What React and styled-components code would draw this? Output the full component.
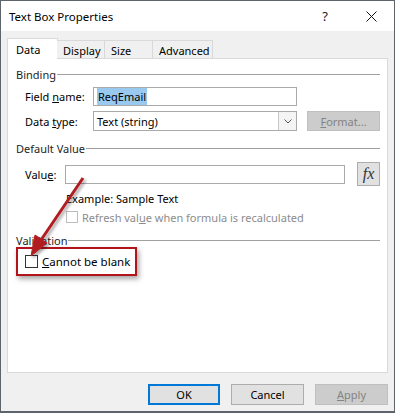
import React from "react";
import styled, { createGlobalStyle } from "styled-components";

const GlobalStyle = createGlobalStyle`
  body {
    margin: 0;
    background: #ffffff;
    font-family: "Noto Sans", "Open Sans", sans-serif;
    font-size: 11px;
    color: #000;
  }
`;

const Window = styled.div`
  position: relative;
  width: 395px;
  height: 413px;
  box-sizing: border-box;
  border: 1px solid #5e646b;
  border-bottom-width: 2px;
  background: #f0f0f0;
  display: flex;
  flex-direction: column;
`;

const TitleBar = styled.div`
  height: 30px;
  background: #fff;
  display: flex;
  align-items: center;
  padding-left: 8px;
`;

const Title = styled.div`
  flex: 1;
  font-size: 11.5px;
`;

const TitleButton = styled.div`
  width: 46px;
  height: 30px;
  display: flex;
  align-items: center;
  justify-content: center;
  font-size: 13px;
  color: #222;
`;

const Body = styled.div`
  flex: 1;
  display: flex;
  flex-direction: column;
  padding: 7px 6px 0 6px;
`;

const TabRow = styled.div`
  display: flex;
  align-items: flex-end;
  height: 21px;
  position: relative;
  z-index: 1;
  margin-bottom: -1px;
`;

const Tab = styled.div`
  width: ${p => p.w}px;
  height: ${p => (p.active ? 21 : 19)}px;
  box-sizing: border-box;
  border: 1px solid #d9d9d9;
  border-left-width: ${p => (p.first || p.active ? 1 : 0)}px;
  border-bottom: ${p => (p.active ? "none" : "1px solid #d9d9d9")};
  background: ${p => (p.active ? "#fff" : "#f0f0f0")};
  padding: ${p => (p.active ? "3px 0 0 8px" : "2px 0 0 6px")};
  ${p => p.active && "margin-right: -1px;"}
`;

const Panel = styled.div`
  height: 315px;
  box-sizing: border-box;
  background: #fff;
  border: 1px solid #d9d9d9;
  padding: 0 7px 0 8px;
  display: flex;
  flex-direction: column;
`;

const Section = styled.div`
  display: flex;
  align-items: center;
  height: 16px;
  margin-top: ${p => p.mt}px;
  color: #1e1e1e;
  &::after {
    content: "";
    flex: 1;
    height: 1px;
    background: #a0a0a0;
    margin-left: 1px;
  }
`;

const Row = styled.div`
  display: flex;
  align-items: center;
  height: ${p => p.h || 20}px;
  margin-top: ${p => p.mt}px;
  padding-left: ${p => p.indent || 9}px;
`;

const Label = styled.div`
  width: ${p => p.w}px;
  flex: none;
`;

const Input = styled.div`
  width: ${p => p.w}px;
  height: ${p => p.h || 19}px;
  box-sizing: border-box;
  border: 1px solid #a9a9a9;
  background: #fff;
  display: flex;
  align-items: center;
  padding-left: 3px;
`;

const Selected = styled.span`
  background: #99c9ef;
  padding: 1px 1px;
`;

const DropButton = styled.div`
  margin-left: auto;
  width: 18px;
  height: 18px;
  box-sizing: border-box;
  border-left: 1px solid #c8c8c8;
  background: #f4f4f4;
  display: flex;
  align-items: center;
  justify-content: center;
`;

const GrayButton = styled.div`
  width: ${p => p.w}px;
  height: ${p => p.h}px;
  margin-left: ${p => p.ml || 0}px;
  box-sizing: border-box;
  border: 1px solid #bfbfbf;
  background: #cccccc;
  color: #838383;
  display: flex;
  align-items: center;
  justify-content: center;
`;

const FxButton = styled.div`
  width: 23px;
  height: 24px;
  margin-left: 12px;
  box-sizing: border-box;
  border: 1px solid #adadad;
  background: #e1e1e1;
  display: flex;
  align-items: center;
  justify-content: center;
  font-family: "Liberation Serif", "DejaVu Serif", serif;
  font-style: italic;
  font-size: 16px;
  color: #333;
`;

const Hint = styled.div`
  height: 16px;
  margin-top: ${p => p.mt}px;
  padding-left: 50px;
  display: flex;
  align-items: center;
  color: ${p => (p.disabled ? "#8c8c8c" : "#000")};
  gap: 4px;
`;

const Check = styled.div`
  width: ${p => p.size || 13}px;
  height: ${p => p.size || 13}px;
  box-sizing: border-box;
  border: 1px solid ${p => (p.disabled ? "#bcbcbc" : "#333")};
  background: #fff;
  flex: none;
`;

const Highlight = styled.div`
  width: 121px;
  height: 29px;
  box-sizing: border-box;
  margin-top: -1px;
  border: 2px solid #b3141c;
  box-shadow: 2px 3px 5px rgba(0, 0, 0, 0.35);
  display: flex;
  align-items: center;
  padding-left: 7px;
  gap: 4px;
  font-size: 11.5px;
`;

const Footer = styled.div`
  display: flex;
  justify-content: flex-end;
  gap: 11px;
  padding: 11px 0 0 0;
`;

const Button = styled.div`
  width: ${p => p.w}px;
  height: 21px;
  box-sizing: border-box;
  border: ${p => (p.primary ? "2px solid #0078d7" : "1px solid #adadad")};
  background: #e1e1e1;
  display: flex;
  align-items: center;
  justify-content: center;
`;

const Overlay = styled.svg`
  position: absolute;
  left: -1px;
  top: -1px;
  pointer-events: none;
`;

const CloseIcon = () => (
  <svg width="11" height="11" viewBox="0 0 11 11">
    <path d="M0.5 0.5L10.5 10.5M10.5 0.5L0.5 10.5" stroke="#111" strokeWidth="1" />
  </svg>
);

const Chevron = () => (
  <svg width="8" height="5" viewBox="0 0 8 5">
    <path d="M0.5 0.5L4 4L7.5 0.5" stroke="#555" fill="none" strokeWidth="1" />
  </svg>
);

export default function App() {
  return (
    <>
      <GlobalStyle />
      <Window>
        <TitleBar>
          <Title>Text Box Properties</Title>
          <TitleButton>?</TitleButton>
          <TitleButton>
            <CloseIcon />
          </TitleButton>
        </TitleBar>
        <Body>
          <TabRow>
            <Tab w={51} active first>Data</Tab>
            <Tab w={48}>Display</Tab>
            <Tab w={48}>Size</Tab>
            <Tab w={60}>Advanced</Tab>
          </TabRow>
          <Panel>
            <Section mt={7}>Binding</Section>
            <Row mt={5} h={19}>
              <Label w={68}>Field <u>n</u>ame:</Label>
              <Input w={204}>
                <Selected>ReqEmail</Selected>
              </Input>
            </Row>
            <Row mt={5}>
              <Label w={68}>Data <u>t</u>ype:</Label>
              <Input w={204} h={20}>
                Text (string)
                <DropButton>
                  <Chevron />
                </DropButton>
              </Input>
              <GrayButton w={73} h={20} ml={10}>
                <span><u>F</u>ormat...</span>
              </GrayButton>
            </Row>
            <Section mt={9}>Default Value</Section>
            <Row mt={6} h={24}>
              <Label w={40}>Valu<u>e</u>:</Label>
              <Input w={280} />
              <FxButton>fx</FxButton>
            </Row>
            <Hint mt={4}>Example: Sample Text</Hint>
            <Hint mt={3} disabled>
              <Check size={12} disabled />
              <span>Refresh val<u>u</u>e when formula is recalculated</span>
            </Hint>
            <Section mt={7}>Validation</Section>
            <Highlight>
              <Check />
              <span><u>C</u>annot be blank</span>
            </Highlight>
          </Panel>
          <Footer>
            <Button w={72} primary>OK</Button>
            <Button w={73}>Cancel</Button>
            <GrayButton w={73} h={21}>
              <span><u>A</u>pply</span>
            </GrayButton>
          </Footer>
        </Body>
        <Overlay width="396" height="414" viewBox="0 0 396 414">
          <defs>
            <filter id="sh" x="-50%" y="-50%" width="200%" height="200%">
              <feDropShadow dx="2" dy="2" stdDeviation="1.5" floodColor="#000" floodOpacity="0.35" />
            </filter>
          </defs>
          <g filter="url(#sh)" fill="#b01e23" stroke="#b01e23">
            <line x1="83" y1="178" x2="41" y2="240" strokeWidth="3" />
            <polygon points="31,256 47,243 35,235" strokeWidth="1" />
          </g>
        </Overlay>
      </Window>
    </>
  );
}
